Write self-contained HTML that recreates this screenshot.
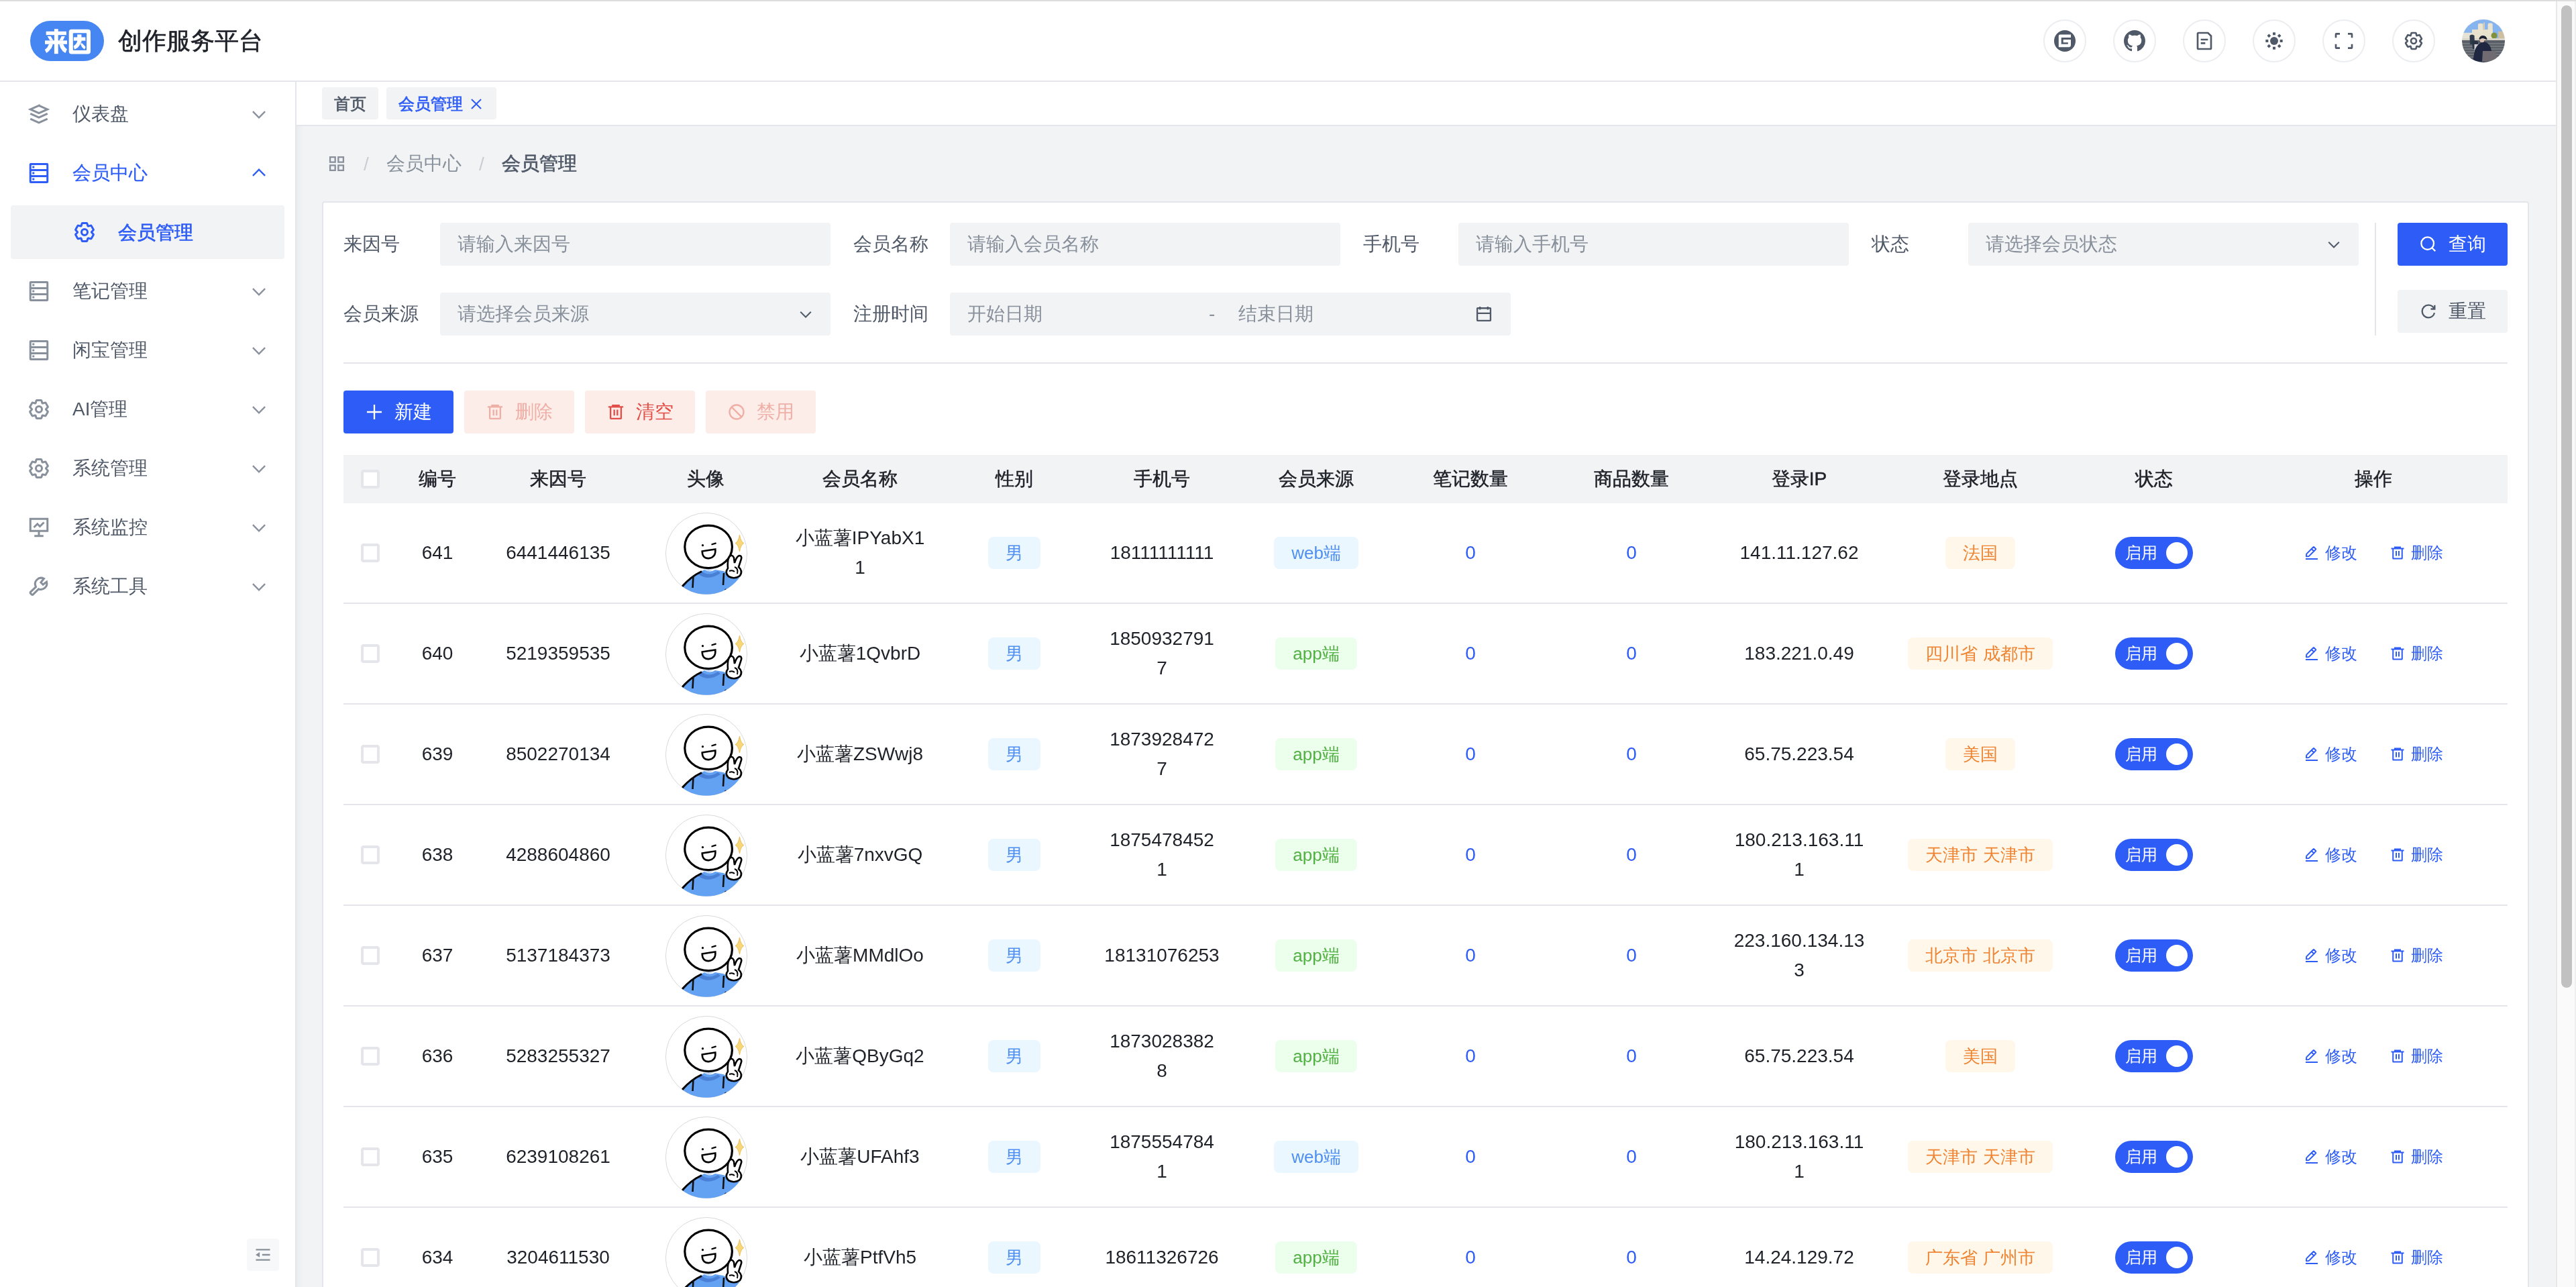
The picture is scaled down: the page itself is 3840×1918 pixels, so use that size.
<!DOCTYPE html><html><head><meta charset="utf-8"><title>会员管理</title><style>
*{box-sizing:border-box;margin:0;padding:0}
html,body{width:3840px;height:1918px;overflow:hidden;background:#fff}
#app{zoom:2;will-change:transform;position:relative;width:1920px;height:959px;overflow:hidden;font-family:"Liberation Sans",sans-serif;font-size:14px;color:#1e2128;background:#f2f3f5}
.ic{display:block}
.abs{position:absolute}
.topline{position:absolute;left:0;top:0;width:1920px;height:1px;background:#dcdedd;z-index:50}
.nav{position:absolute;left:0;top:0;width:1905px;height:61px;background:#fff;border-bottom:1px solid #e5e6eb}
.logo{position:absolute;left:22.5px;top:15.5px;width:55px;height:30px;border-radius:15px;background:#4686f3}
.title{position:absolute;left:88px;top:18.5px;line-height:24px;font-size:18px;color:#1e2128;-webkit-text-stroke:0.3px #1e2128;white-space:nowrap}
.cbtn{position:absolute;top:14.5px;width:32px;height:32px;border-radius:50%;border:1px solid #ebedf0;background:#fff;color:#505968;display:flex;align-items:center;justify-content:center}
.side{position:absolute;left:0;top:61px;width:221px;height:898px;background:#fff;border-right:1px solid #e5e6eb}
.shadow{position:absolute;left:221px;top:61px;width:5px;height:898px;background:linear-gradient(90deg,rgba(0,0,0,0.03),rgba(0,0,0,0))}
.mi{position:absolute;left:8px;width:204px;height:40px;border-radius:2px}
.mi .ico{position:absolute;left:12px;top:11px;color:#88909b}
.mi .txt{position:absolute;left:46px;top:0;line-height:40px;color:#505968;white-space:nowrap}
.mi .arr{position:absolute;left:178px;top:13px;color:#88909b}
.mi.sel .ico,.mi.sel .txt,.mi.sel .arr{color:#2d5cf6}
.mi.sel .txt{-webkit-text-stroke:0.1px #2d5cf6}
.tabs{position:absolute;left:221px;top:61px;width:1684px;height:33px;background:#fff;border-bottom:1px solid #e5e6eb}
.tab{position:absolute;top:4px;height:24px;border-radius:2px;background:#f2f3f5;font-size:12px;line-height:25px;color:#505968;-webkit-text-stroke:0.35px currentColor;white-space:nowrap}
.bc{position:absolute;top:110px;line-height:24px;font-size:14px;color:#88909b;white-space:nowrap}
.card{position:absolute;left:240px;top:150px;width:1645px;height:820px;background:#fff;border:1px solid #e5e6eb;border-radius:2px}
.lbl{position:absolute;line-height:32px;color:#505968;white-space:nowrap}
.inp{position:absolute;height:32px;background:#f2f3f5;border-radius:2px;color:#88909b;line-height:32px;padding-left:13px;white-space:nowrap}
.btn{position:absolute;height:32px;width:82px;border-radius:2px;display:flex;align-items:center;justify-content:center;white-space:nowrap}
.btn .ic{margin-right:8px}
.th{position:absolute;left:256px;top:339px;width:1613px;height:36px;background:#f2f3f5}
.cell{position:absolute;display:flex;align-items:center;justify-content:center;text-align:center;white-space:nowrap;line-height:22px}
.hd{color:#1e2128;-webkit-text-stroke:0.25px #1e2128}
.cb{width:14px;height:14px;border:2px solid #e5e6eb;border-radius:2px;background:#fff}
.rowb{position:absolute;left:256px;width:1613px;height:1px;background:#e5e6eb}
.tag{height:24px;line-height:24px;border-radius:4px;padding:0 13px;font-size:13px;white-space:nowrap}
.tb{background:#ebf7fe;color:#4f8ff2}
.tg{background:#ecfeec;color:#50b142}
.to{background:#fef7ea;color:#ee8432}
.num{color:#2d5cf6}
.sw{position:relative;width:58px;height:24px;border-radius:12px;background:#2d5cf6;color:#fff;font-size:12px;line-height:24px;text-align:left;padding-left:7.5px}
.sw::after{content:"";position:absolute;right:4px;top:4px;width:16px;height:16px;border-radius:50%;background:#fff}
.lnk{color:#2d5cf6;font-size:12px;display:flex;align-items:center}
.lnk .ic{margin-right:4px}
.sb{position:absolute;left:1905px;top:0;width:15px;height:959px;background:#fafafa;border-left:1px solid #e8e8e8;border-right:1px solid #efefef}
@media (max-width:2000px){html,body{width:1920px;height:959px} #app{zoom:1}}
.thumb{position:absolute;left:3px;top:4px;width:8px;height:732px;border-radius:4px;background:#c1c1c1}
</style></head><body><div id="app">
<div class="nav">
<div class="logo"><svg width="55" height="30" viewBox="0 0 110 60"><g fill="#fff"><rect x="35.9" y="12.2" width="5.8" height="37"/><rect x="23.7" y="15.8" width="30.2" height="5.4"/><rect x="22" y="29.4" width="33" height="5.4"/><path d="M25.6 22.9H30.7L34.5 29.6H29.6Z"/><path d="M46.8 22.9H51.9L48.7 29.6H43.3Z"/><path d="M28.1 34.8H33.9L31.8 40.5L27.5 45.4L24.2 48.1L21.8 42.9L25.3 40Z"/><path d="M43.2 34.8H49.2L51.4 38.9L54.9 42.4L52.5 48.1L48.7 45.4L45.2 40.5Z"/><rect x="57.7" y="12.8" width="32.3" height="36.7" rx="4"/></g><rect x="63.8" y="18.2" width="20.3" height="25.9" rx="1" fill="#4686f3"/><g fill="#fff"><rect x="70.2" y="20.4" width="6.2" height="12"/><rect x="64.9" y="24.5" width="17.5" height="5.2"/><path d="M70.9 29.7H76.1L74.2 35.7L70.9 40L66.1 42.7L64.7 37.8L68.3 34.5Z"/><path d="M74.5 33.5H77.5L80.2 36.2L82.7 38.9L80.8 42.7L77 38.9Z"/></g></svg></div>
<div class="title">创作服务平台</div>
<div class="cbtn" style="left:1523px"><svg class="ic" width="16" height="16" viewBox="0 0 32 32"><circle cx="16" cy="16" r="16" fill="currentColor"/><path d="M9 6.4H25V10.9H10.7V20.8H20.8V18.2H13.7V14H25V22A3.2 3.2 0 0 1 21.8 25.2H6.8V8.6A2.2 2.2 0 0 1 9 6.4Z" fill="#fff"/></svg></div>
<div class="cbtn" style="left:1575px"><svg class="ic" width="16" height="16" viewBox="0 0 16 16"><path fill="currentColor" d="M8 0C3.58 0 0 3.58 0 8c0 3.54 2.29 6.53 5.47 7.59.4.07.55-.17.55-.38 0-.19-.01-.82-.01-1.49-2.01.37-2.53-.49-2.69-.94-.09-.23-.48-.94-.82-1.13-.28-.15-.68-.52-.01-.53.63-.01 1.08.58 1.23.82.72 1.21 1.87.87 2.33.66.07-.52.28-.87.51-1.07-1.78-.2-3.64-.89-3.64-3.95 0-.87.31-1.59.82-2.15-.08-.2-.36-1.02.08-2.12 0 0 .67-.21 2.2.82.64-.18 1.32-.27 2-.27.68 0 1.36.09 2 .27 1.530-1.04 2.2-.82 2.2-.82.44 1.1.16 1.92.08 2.12.51.56.82 1.27.82 2.15 0 3.07-1.87 3.75-3.650 3.95.29.25.54.73.54 1.48 0 1.07-.01 1.93-.01 2.2 0 .21.15.46.55.38A8.013 8.013 0 0016 8c0-4.42-3.58-8-8-8z"/></svg></div>
<div class="cbtn" style="left:1627px"><svg class="ic" width="16" height="16" viewBox="0 0 48 48" fill="none" stroke="currentColor" stroke-width="4" ><path d="M16 21h16m-16 8h10m11 13H11a2 2 0 0 1-2-2V8a2 2 0 0 1 2-2h21l7 7v27a2 2 0 0 1-2 2Z"/></svg></div>
<div class="cbtn" style="left:1679px"><svg class="ic" width="16" height="16" viewBox="0 0 48 48" fill="currentColor"><circle cx="24" cy="24" r="9"/><rect x="21" y="5" width="6" height="6" rx=".5"/><rect x="21" y="37" width="6" height="6" rx=".5"/><rect x="5" y="21" width="6" height="6" rx=".5"/><rect x="37" y="21" width="6" height="6" rx=".5"/><rect x="9.5" y="9.5" width="6" height="6" rx=".5" transform="rotate(45 12.5 12.5)"/><rect x="32.5" y="9.5" width="6" height="6" rx=".5" transform="rotate(45 35.5 12.5)"/><rect x="9.5" y="32.5" width="6" height="6" rx=".5" transform="rotate(45 12.5 35.5)"/><rect x="32.5" y="32.5" width="6" height="6" rx=".5" transform="rotate(45 35.5 35.5)"/></svg></div>
<div class="cbtn" style="left:1731px"><svg class="ic" width="16" height="16" viewBox="0 0 48 48" fill="none" stroke="currentColor" stroke-width="4" ><path d="M42 17V9a1 1 0 0 0-1-1h-8M6 17V9a1 1 0 0 1 1-1h8m27 23v8a1 1 0 0 1-1 1h-8M6 31v8a1 1 0 0 0 1 1h8"/></svg></div>
<div class="cbtn" style="left:1783px"><svg class="ic" width="16" height="16" viewBox="0 0 48 48" fill="none" stroke="currentColor" stroke-width="4" ><path d="M18.797 6.732A1 1 0 0 1 19.76 6h8.48a1 1 0 0 1 .964.732l1.285 4.628a1 1 0 0 0 1.213.7l4.651-1.2a1 1 0 0 1 1.116.468l4.24 7.344a1 1 0 0 1-.153 1.2L38.193 23.3a1 1 0 0 0 0 1.402l3.364 3.427a1 1 0 0 1 .153 1.2l-4.24 7.344a1 1 0 0 1-1.116.468l-4.65-1.2a1 1 0 0 0-1.214.7l-1.285 4.628a1 1 0 0 1-.964.732h-8.48a1 1 0 0 1-.963-.732L17.51 36.64a1 1 0 0 0-1.213-.7l-4.65 1.2a1 1 0 0 1-1.116-.468l-4.24-7.344a1 1 0 0 1 .153-1.2L9.809 24.7a1 1 0 0 0 0-1.402l-3.364-3.427a1 1 0 0 1-.153-1.2l4.24-7.344a1 1 0 0 1 1.116-.468l4.65 1.2a1 1 0 0 0 1.213-.7l1.286-4.628Z"/><path d="M30 24a6 6 0 1 1-12 0 6 6 0 0 1 12 0Z"/></svg></div>
<div class="abs" style="left:1835px;top:14.5px;width:32px;height:32px;border-radius:50%;overflow:hidden"><svg width="32" height="32" viewBox="0 0 64 64" style="filter:blur(0.35px)"><rect width="64" height="64" fill="#86b4ee"/><rect x="0" y="19.8" width="23" height="10" fill="#e6e2d6"/><rect x="54" y="17.7" width="10" height="13" fill="#cdbf9f"/><rect x="15" y="15" width="31" height="15" fill="#e8e1cc"/><rect x="23.9" y="6" width="7.6" height="14" rx="2" fill="#ebe4cf"/><rect x="38.6" y="5.5" width="7.1" height="14.5" rx="2" fill="#ebe4cf"/><rect x="31.8" y="4.6" width="2.2" height="11" fill="#d8cdb2"/><circle cx="48" cy="24" r="4.5" fill="#80903f"/><rect x="0" y="30" width="64" height="34" fill="#5a5e66"/><path d="M0 36h64M0 40h64M0 44h64M0 48h64M0 52h64M0 56h64" stroke="#8b8f95" stroke-width="1"/><rect x="0" y="28" width="64" height="3" fill="#d9d4c8"/><path d="M11.5 24 Q15 21 18.5 24 L19 37 L12 37Z" fill="#2f3a4a"/><path d="M15 33 Q20 30 24 33 L24 44 L16 44Z" fill="#2a3344"/><rect x="18.5" y="37" width="6.5" height="12" fill="#cfcfd2"/><path d="M16 64 L19 46 Q24 34 33 33 Q42 35 44 46 L45 64Z" fill="#1f2840"/><path d="M31 47 L50 47 L53 62 L30 63Z" fill="#6f6b70"/><ellipse cx="30" cy="31" rx="3.4" ry="3.2" fill="#dcc2ae"/><path d="M25.5 29.5 Q26 24 31.5 24 Q37 24 37.5 30.5 L34 29 Q30 26.5 26.5 30Z" fill="#1b2130"/></svg></div>
</div>
<div class="side">
<div class="mi" style="top:4px"><div class="ico"><svg class="ic" width="18" height="18" viewBox="0 0 48 48" fill="none" stroke="currentColor" stroke-width="4" ><path d="M24.015 7.017 41 14.62l-16.985 7.605L7.03 14.62l16.985-7.604Z"/><path d="m41 23.255-16.985 7.604L7.03 23.255"/><path d="m40.97 33.412-16.985 7.605-16.985-7.605"/></svg></div><div class="txt">仪表盘</div><div class="arr"><svg class="ic" width="14" height="14" viewBox="0 0 48 48" fill="none" stroke="currentColor" stroke-width="4" ><path d="M39.6 17.443 24.043 33 8.487 17.443"/></svg></div></div>
<div class="mi sel" style="top:48px"><div class="ico"><svg class="ic" width="18" height="18" viewBox="0 0 48 48" fill="none" stroke="currentColor" stroke-width="4" ><path d="M7 18h34v12H7V18ZM40 6H8a1 1 0 0 0-1 1v11h34V7a1 1 0 0 0-1-1ZM7 30h34v11a1 1 0 0 1-1 1H8a1 1 0 0 1-1-1V30Z"/><path d="M11 10h4v4h-4zM11 22h4v4h-4zM11 34h4v4h-4z" fill="currentColor" stroke="none"/></svg></div><div class="txt">会员中心</div><div class="arr"><svg class="ic" width="14" height="14" viewBox="0 0 48 48" fill="none" stroke="currentColor" stroke-width="4" ><path d="M39.6 30.557 24.043 15 8.487 30.557"/></svg></div></div>
<div class="mi" style="top:136px"><div class="ico"><svg class="ic" width="18" height="18" viewBox="0 0 48 48" fill="none" stroke="currentColor" stroke-width="4" ><path d="M7 18h34v12H7V18ZM40 6H8a1 1 0 0 0-1 1v11h34V7a1 1 0 0 0-1-1ZM7 30h34v11a1 1 0 0 1-1 1H8a1 1 0 0 1-1-1V30Z"/><path d="M11 10h4v4h-4zM11 22h4v4h-4zM11 34h4v4h-4z" fill="currentColor" stroke="none"/></svg></div><div class="txt">笔记管理</div><div class="arr"><svg class="ic" width="14" height="14" viewBox="0 0 48 48" fill="none" stroke="currentColor" stroke-width="4" ><path d="M39.6 17.443 24.043 33 8.487 17.443"/></svg></div></div>
<div class="mi" style="top:180px"><div class="ico"><svg class="ic" width="18" height="18" viewBox="0 0 48 48" fill="none" stroke="currentColor" stroke-width="4" ><path d="M7 18h34v12H7V18ZM40 6H8a1 1 0 0 0-1 1v11h34V7a1 1 0 0 0-1-1ZM7 30h34v11a1 1 0 0 1-1 1H8a1 1 0 0 1-1-1V30Z"/><path d="M11 10h4v4h-4zM11 22h4v4h-4zM11 34h4v4h-4z" fill="currentColor" stroke="none"/></svg></div><div class="txt">闲宝管理</div><div class="arr"><svg class="ic" width="14" height="14" viewBox="0 0 48 48" fill="none" stroke="currentColor" stroke-width="4" ><path d="M39.6 17.443 24.043 33 8.487 17.443"/></svg></div></div>
<div class="mi" style="top:224px"><div class="ico"><svg class="ic" width="18" height="18" viewBox="0 0 48 48" fill="none" stroke="currentColor" stroke-width="4" ><path d="M18.797 6.732A1 1 0 0 1 19.76 6h8.48a1 1 0 0 1 .964.732l1.285 4.628a1 1 0 0 0 1.213.7l4.651-1.2a1 1 0 0 1 1.116.468l4.24 7.344a1 1 0 0 1-.153 1.2L38.193 23.3a1 1 0 0 0 0 1.402l3.364 3.427a1 1 0 0 1 .153 1.2l-4.24 7.344a1 1 0 0 1-1.116.468l-4.65-1.2a1 1 0 0 0-1.214.7l-1.285 4.628a1 1 0 0 1-.964.732h-8.48a1 1 0 0 1-.963-.732L17.51 36.64a1 1 0 0 0-1.213-.7l-4.65 1.2a1 1 0 0 1-1.116-.468l-4.24-7.344a1 1 0 0 1 .153-1.2L9.809 24.7a1 1 0 0 0 0-1.402l-3.364-3.427a1 1 0 0 1-.153-1.2l4.24-7.344a1 1 0 0 1 1.116-.468l4.65 1.2a1 1 0 0 0 1.213-.7l1.286-4.628Z"/><path d="M30 24a6 6 0 1 1-12 0 6 6 0 0 1 12 0Z"/></svg></div><div class="txt">AI管理</div><div class="arr"><svg class="ic" width="14" height="14" viewBox="0 0 48 48" fill="none" stroke="currentColor" stroke-width="4" ><path d="M39.6 17.443 24.043 33 8.487 17.443"/></svg></div></div>
<div class="mi" style="top:268px"><div class="ico"><svg class="ic" width="18" height="18" viewBox="0 0 48 48" fill="none" stroke="currentColor" stroke-width="4" ><path d="M18.797 6.732A1 1 0 0 1 19.76 6h8.48a1 1 0 0 1 .964.732l1.285 4.628a1 1 0 0 0 1.213.7l4.651-1.2a1 1 0 0 1 1.116.468l4.24 7.344a1 1 0 0 1-.153 1.2L38.193 23.3a1 1 0 0 0 0 1.402l3.364 3.427a1 1 0 0 1 .153 1.2l-4.24 7.344a1 1 0 0 1-1.116.468l-4.65-1.2a1 1 0 0 0-1.214.7l-1.285 4.628a1 1 0 0 1-.964.732h-8.48a1 1 0 0 1-.963-.732L17.51 36.64a1 1 0 0 0-1.213-.7l-4.65 1.2a1 1 0 0 1-1.116-.468l-4.24-7.344a1 1 0 0 1 .153-1.2L9.809 24.7a1 1 0 0 0 0-1.402l-3.364-3.427a1 1 0 0 1-.153-1.2l4.24-7.344a1 1 0 0 1 1.116-.468l4.65 1.2a1 1 0 0 0 1.213-.7l1.286-4.628Z"/><path d="M30 24a6 6 0 1 1-12 0 6 6 0 0 1 12 0Z"/></svg></div><div class="txt">系统管理</div><div class="arr"><svg class="ic" width="14" height="14" viewBox="0 0 48 48" fill="none" stroke="currentColor" stroke-width="4" ><path d="M39.6 17.443 24.043 33 8.487 17.443"/></svg></div></div>
<div class="mi" style="top:312px"><div class="ico"><svg class="ic" width="18" height="18" viewBox="0 0 48 48" fill="none" stroke="currentColor" stroke-width="4" ><path d="M41 7H7v24h34V7Z"/><path d="M24 31v10"/><path d="M15 41h18"/><path d="M14 24l7-7 5 5 8-8"/></svg></div><div class="txt">系统监控</div><div class="arr"><svg class="ic" width="14" height="14" viewBox="0 0 48 48" fill="none" stroke="currentColor" stroke-width="4" ><path d="M39.6 17.443 24.043 33 8.487 17.443"/></svg></div></div>
<div class="mi" style="top:356px"><div class="ico"><svg class="ic" width="18" height="18" viewBox="0 0 48 48" fill="none" stroke="currentColor" stroke-width="4" ><path d="M23.3 29.1 L12.5 39.9 Q11 41.4 9.5 39.9 L7.5 37.9 Q6 36.4 7.5 34.9 L18 24.8 A12 12 0 0 1 34 8.4 L27.8 15.9 L32.2 20.4 L39.4 14.9 A12 12 0 0 1 23.3 29.1Z"/></svg></div><div class="txt">系统工具</div><div class="arr"><svg class="ic" width="14" height="14" viewBox="0 0 48 48" fill="none" stroke="currentColor" stroke-width="4" ><path d="M39.6 17.443 24.043 33 8.487 17.443"/></svg></div></div>
<div class="mi" style="top:92px;background:#f2f3f5"><div class="ico" style="left:46px;color:#2d5cf6"><svg class="ic" width="18" height="18" viewBox="0 0 48 48" fill="none" stroke="currentColor" stroke-width="4" ><path d="M18.797 6.732A1 1 0 0 1 19.76 6h8.48a1 1 0 0 1 .964.732l1.285 4.628a1 1 0 0 0 1.213.7l4.651-1.2a1 1 0 0 1 1.116.468l4.24 7.344a1 1 0 0 1-.153 1.2L38.193 23.3a1 1 0 0 0 0 1.402l3.364 3.427a1 1 0 0 1 .153 1.2l-4.24 7.344a1 1 0 0 1-1.116.468l-4.65-1.2a1 1 0 0 0-1.214.7l-1.285 4.628a1 1 0 0 1-.964.732h-8.48a1 1 0 0 1-.963-.732L17.51 36.64a1 1 0 0 0-1.213-.7l-4.65 1.2a1 1 0 0 1-1.116-.468l-4.24-7.344a1 1 0 0 1 .153-1.2L9.809 24.7a1 1 0 0 0 0-1.402l-3.364-3.427a1 1 0 0 1-.153-1.2l4.24-7.344a1 1 0 0 1 1.116-.468l4.65 1.2a1 1 0 0 0 1.213-.7l1.286-4.628Z"/><path d="M30 24a6 6 0 1 1-12 0 6 6 0 0 1 12 0Z"/></svg></div><div class="txt" style="left:80px;top:0.5px;color:#2d5cf6;-webkit-text-stroke:0.35px #2d5cf6">会员管理</div></div>
<div class="abs" style="left:184px;top:862px;width:24px;height:24px;border-radius:2px;background:#f7f8fa;color:#88909b;display:flex;align-items:center;justify-content:center"><svg class="ic" width="14" height="14" viewBox="0 0 48 48" fill="none" stroke="currentColor" stroke-width="4" ><path d="M42 11H6M42 24H22M42 37H6M13.66 26.912l-4.82-3.118 4.82-3.118v6.236Z"/></svg></div>
</div>
<div class="shadow"></div>
<div class="tabs">
<div class="tab" style="left:19px;width:42px;text-align:center">首页</div>
<div class="tab" style="left:67px;width:82px;color:#2d5cf6;padding-left:9px">会员管理<span class="abs" style="left:61px;top:6.7px;color:#2d5cf6"><svg class="ic" width="12" height="12" viewBox="0 0 48 48" fill="none" stroke="currentColor" stroke-width="4" ><path d="M9.857 9.858 24 24m0 0 14.142 14.142M24 24 38.142 9.858M24 24 9.857 38.142"/></svg></span></div>
</div>
<div class="abs" style="left:244px;top:115px;color:#88909b"><svg class="ic" width="14" height="14" viewBox="0 0 48 48" fill="none" stroke="currentColor" stroke-width="4" ><path d="M7 7h13v13H7zM28 7h13v13H28zM7 28h13v13H7zM28 28h13v13H28z"/></svg></div>
<div class="bc" style="left:271px;top:110.5px;color:#c9cdd4">/</div>
<div class="bc" style="left:288px">会员中心</div>
<div class="bc" style="left:357px;top:110.5px;color:#c9cdd4">/</div>
<div class="bc" style="left:374px;color:#505968;-webkit-text-stroke:0.35px #505968">会员管理</div>
<div class="card"></div>
<div class="lbl" style="left:256px;top:166px">来因号</div>
<div class="inp" style="left:328px;top:166px;width:291px">请输入来因号</div>
<div class="lbl" style="left:636px;top:166px">会员名称</div>
<div class="inp" style="left:708px;top:166px;width:291px">请输入会员名称</div>
<div class="lbl" style="left:1016px;top:166px">手机号</div>
<div class="inp" style="left:1087px;top:166px;width:291px">请输入手机号</div>
<div class="lbl" style="left:1395px;top:166px">状态</div>
<div class="inp" style="left:1467px;top:166px;width:291px">请选择会员状态<span class="abs" style="right:12.5px;top:10px;color:#505968"><svg class="ic" width="12" height="12" viewBox="0 0 48 48" fill="none" stroke="currentColor" stroke-width="4" ><path d="M39.6 17.443 24.043 33 8.487 17.443"/></svg></span></div>
<div class="lbl" style="left:256px;top:218px">会员来源</div>
<div class="inp" style="left:328px;top:218px;width:291px">请选择会员来源<span class="abs" style="right:12.5px;top:10px;color:#505968"><svg class="ic" width="12" height="12" viewBox="0 0 48 48" fill="none" stroke="currentColor" stroke-width="4" ><path d="M39.6 17.443 24.043 33 8.487 17.443"/></svg></span></div>
<div class="lbl" style="left:636px;top:218px">注册时间</div>
<div class="inp" style="left:708px;top:218px;width:418px">开始日期<span class="abs" style="left:193px;top:0">-</span><span class="abs" style="left:215px;top:0">结束日期</span><span class="abs" style="left:391px;top:9px;color:#505968"><svg class="ic" width="14" height="14" viewBox="0 0 48 48" fill="none" stroke="currentColor" stroke-width="4" ><path d="M7 22h34M14 5v8m20-8v8M8 41h32a1 1 0 0 0 1-1V10a1 1 0 0 0-1-1H8a1 1 0 0 0-1 1v30a1 1 0 0 0 1 1Z"/></svg></span></div>
<div class="abs" style="left:1770px;top:166px;width:1px;height:84px;background:#e5e6eb"></div>
<div class="btn" style="left:1787px;top:166px;background:#2d5cf6;color:#fff"><svg class="ic" width="14" height="14" viewBox="0 0 48 48" fill="none" stroke="currentColor" stroke-width="4" ><path d="M33.072 33.071c6.248-6.248 6.248-16.379 0-22.627-6.249-6.249-16.38-6.249-22.628 0-6.248 6.248-6.248 16.379 0 22.627 6.248 6.248 16.38 6.248 22.628 0Zm0 0 8.485 8.485"/></svg>查询</div>
<div class="btn" style="left:1787px;top:216px;background:#f2f3f5;color:#505968"><svg class="ic" width="14" height="14" viewBox="0 0 48 48" fill="none" stroke="currentColor" stroke-width="4" ><path d="M38.837 18C36.463 12.136 30.715 8 24 8 15.163 8 8 15.163 8 24s7.163 16 16 16c7.455 0 13.72-5.1 15.496-12M40 8v10H30"/></svg>重置</div>
<div class="abs" style="left:256px;top:270px;width:1613px;height:1px;background:#e5e6eb"></div>
<div class="btn" style="left:256px;top:291px;background:#2d5cf6;color:#fff"><svg class="ic" width="14" height="14" viewBox="0 0 48 48" fill="none" stroke="currentColor" stroke-width="4" ><path d="M5 24h38M24 5v38"/></svg>新建</div>
<div class="btn" style="left:346px;top:291px;background:#fcede9;color:#efafa6"><svg class="ic" width="14" height="14" viewBox="0 0 48 48" fill="none" stroke="currentColor" stroke-width="4" ><path d="M5 11h5.5m0 0v29a1 1 0 0 0 1 1h25a1 1 0 0 0 1-1V11m-27 0H16m21.5 0H43m-5.5 0H32m-16 0V7h16v4m-16 0h16M20 18v15m8-15v15"/></svg>删除</div>
<div class="btn" style="left:436px;top:291px;background:#fcede9;color:#e24f48"><svg class="ic" width="14" height="14" viewBox="0 0 48 48" fill="none" stroke="currentColor" stroke-width="4" ><path d="M5 11h5.5m0 0v29a1 1 0 0 0 1 1h25a1 1 0 0 0 1-1V11m-27 0H16m21.5 0H43m-5.5 0H32m-16 0V7h16v4m-16 0h16M20 18v15m8-15v15"/></svg>清空</div>
<div class="btn" style="left:526px;top:291px;background:#fcede9;color:#efafa6"><svg class="ic" width="14" height="14" viewBox="0 0 48 48" fill="none" stroke="currentColor" stroke-width="4" ><path d="M36.728 36.728c7.03-7.03 7.03-18.427 0-25.456-7.03-7.03-18.427-7.03-25.456 0m25.456 25.456c-7.03 7.03-18.427 7.03-25.456 0-7.03-7.03-7.03-18.427 0-25.456m25.456 25.456L11.272 11.272"/></svg>禁用</div>
<div class="th"></div>
<div class="cell" style="left:256px;top:339px;width:40px;height:36px"><div class="cb"></div></div>
<div class="cell hd" style="left:296px;top:339px;width:60px;height:36px">编号</div>
<div class="cell hd" style="left:356px;top:339px;width:120px;height:36px">来因号</div>
<div class="cell hd" style="left:476px;top:339px;width:100px;height:36px">头像</div>
<div class="cell hd" style="left:576px;top:339px;width:130px;height:36px">会员名称</div>
<div class="cell hd" style="left:706px;top:339px;width:100px;height:36px">性别</div>
<div class="cell hd" style="left:806px;top:339px;width:120px;height:36px">手机号</div>
<div class="cell hd" style="left:926px;top:339px;width:110px;height:36px">会员来源</div>
<div class="cell hd" style="left:1036px;top:339px;width:120px;height:36px">笔记数量</div>
<div class="cell hd" style="left:1156px;top:339px;width:120px;height:36px">商品数量</div>
<div class="cell hd" style="left:1276px;top:339px;width:130px;height:36px">登录IP</div>
<div class="cell hd" style="left:1406px;top:339px;width:140px;height:36px">登录地点</div>
<div class="cell hd" style="left:1546px;top:339px;width:119px;height:36px">状态</div>
<div class="cell hd" style="left:1666px;top:339px;width:206px;height:36px">操作</div>
<div class="cell" style="left:256px;top:375px;width:40px;height:74px"><div class="cb"></div></div>
<div class="cell" style="left:296px;top:375px;width:60px;height:74px">641</div>
<div class="cell" style="left:356px;top:375px;width:120px;height:74px">6441446135</div>
<div class="cell" style="left:476px;top:375px;width:100px;height:74px"><svg width="61" height="61" viewBox="0 0 122 122" style="transform:translate(0.5px,0.5px)"><defs><clipPath id="ac0"><circle cx="61" cy="61" r="60.8"/></clipPath></defs><circle cx="61" cy="61" r="60.6" fill="#fff" stroke="#d9d9d9" stroke-width="1"/><g clip-path="url(#ac0)"><path d="M20 126 L25 110 Q38 95 52 88 L58 85 Q66 90 74 85 L86 87 Q96 92 110 92 L124 98 L124 130 Z" fill="#63a1f2"/><path d="M54 87 Q64 96 78 87 L82 90 Q64 103 48 91 Z" fill="#4a7fd6"/><path d="M58 84.5 Q64 89 71 84.5" fill="#b9cdf0" stroke="none"/><path d="M25 110 Q38 95 54 87.5" fill="none" stroke="#000" stroke-width="3"/><path d="M41.5 94 L40.5 112 M87 90 L86 108 M40 119 L40 126 M89 114 L93 121" fill="none" stroke="#111" stroke-width="2.6"/></g><ellipse cx="64.1" cy="50.9" rx="35.3" ry="31.8" fill="#fff" stroke="#000" stroke-width="3.2"/><circle cx="55.5" cy="48.7" r="1.6" fill="#000"/><path d="M69.4 47.3 L74.8 45.6" stroke="#000" stroke-width="2.2" stroke-linecap="round"/><path d="M54.7 57.5 Q64 56 74.3 54.5 Q75.5 66.5 64.5 68.1 Q55 68.5 54.7 57.5Z" fill="#fff" stroke="#000" stroke-width="2.6"/><g transform="translate(3 1)"><path d="M91 94 Q85 88 90 82 Q89 70 92 65 Q96 60 99 66 L100 74 Q103 64 107 63 Q111 63 110 68 L106 80 Q113 86 108 93 Q100 99 91 94Z" fill="#fff" stroke="#000" stroke-width="2.6"/><path d="M92 86 Q97 84 100 87 M100 80 Q106 82 104 90" fill="none" stroke="#000" stroke-width="2"/></g><path d="M110.5 33 Q112 43 116.8 45.5 Q112 48 110.5 58 Q109 48 104.2 45.5 Q109 43 110.5 33Z" fill="#f7d77a" stroke="#ecbd58" stroke-width="1"/></svg></div>
<div class="cell" style="left:576px;top:375px;width:130px;height:74px">小蓝薯IPYabX1<br>1</div>
<div class="cell" style="left:706px;top:375px;width:100px;height:74px"><div class="tag tb">男</div></div>
<div class="cell" style="left:806px;top:375px;width:120px;height:74px">18111111111</div>
<div class="cell" style="left:926px;top:375px;width:110px;height:74px"><div class="tag tb">web端</div></div>
<div class="cell" style="left:1036px;top:375px;width:120px;height:74px"><span class="num">0</span></div>
<div class="cell" style="left:1156px;top:375px;width:120px;height:74px"><span class="num">0</span></div>
<div class="cell" style="left:1276px;top:375px;width:130px;height:74px">141.11.127.62</div>
<div class="cell" style="left:1406px;top:375px;width:140px;height:74px"><div class="tag to">法国</div></div>
<div class="cell" style="left:1546px;top:375px;width:119px;height:74px"><div class="sw">启用</div></div>
<div class="cell" style="left:1666px;top:375px;width:206px;height:74px"><div class="lnk"><svg class="ic" width="12" height="12" viewBox="0 0 48 48" fill="none" stroke="currentColor" stroke-width="4" ><path d="m30.48 19.038 5.733-5.734a1 1 0 0 0 0-1.414l-5.586-5.586a1 1 0 0 0-1.414 0l-5.734 5.734m7 7L15.763 33.754a1 1 0 0 1-.59.286l-6.048.708a1 1 0 0 1-1.113-1.069l.477-6.31a1 1 0 0 1 .29-.631l14.7-14.7m7 7-7-7M6 42h36"/></svg>修改</div><div style="width:24px"></div><div class="lnk"><svg class="ic" width="12" height="12" viewBox="0 0 48 48" fill="none" stroke="currentColor" stroke-width="4" ><path d="M5 11h5.5m0 0v29a1 1 0 0 0 1 1h25a1 1 0 0 0 1-1V11m-27 0H16m21.5 0H43m-5.5 0H32m-16 0V7h16v4m-16 0h16M20 18v15m8-15v15"/></svg>删除</div></div>
<div class="rowb" style="top:449px"></div>
<div class="cell" style="left:256px;top:450px;width:40px;height:74px"><div class="cb"></div></div>
<div class="cell" style="left:296px;top:450px;width:60px;height:74px">640</div>
<div class="cell" style="left:356px;top:450px;width:120px;height:74px">5219359535</div>
<div class="cell" style="left:476px;top:450px;width:100px;height:74px"><svg width="61" height="61" viewBox="0 0 122 122" style="transform:translate(0.5px,0.5px)"><defs><clipPath id="ac1"><circle cx="61" cy="61" r="60.8"/></clipPath></defs><circle cx="61" cy="61" r="60.6" fill="#fff" stroke="#d9d9d9" stroke-width="1"/><g clip-path="url(#ac1)"><path d="M20 126 L25 110 Q38 95 52 88 L58 85 Q66 90 74 85 L86 87 Q96 92 110 92 L124 98 L124 130 Z" fill="#63a1f2"/><path d="M54 87 Q64 96 78 87 L82 90 Q64 103 48 91 Z" fill="#4a7fd6"/><path d="M58 84.5 Q64 89 71 84.5" fill="#b9cdf0" stroke="none"/><path d="M25 110 Q38 95 54 87.5" fill="none" stroke="#000" stroke-width="3"/><path d="M41.5 94 L40.5 112 M87 90 L86 108 M40 119 L40 126 M89 114 L93 121" fill="none" stroke="#111" stroke-width="2.6"/></g><ellipse cx="64.1" cy="50.9" rx="35.3" ry="31.8" fill="#fff" stroke="#000" stroke-width="3.2"/><circle cx="55.5" cy="48.7" r="1.6" fill="#000"/><path d="M69.4 47.3 L74.8 45.6" stroke="#000" stroke-width="2.2" stroke-linecap="round"/><path d="M54.7 57.5 Q64 56 74.3 54.5 Q75.5 66.5 64.5 68.1 Q55 68.5 54.7 57.5Z" fill="#fff" stroke="#000" stroke-width="2.6"/><g transform="translate(3 1)"><path d="M91 94 Q85 88 90 82 Q89 70 92 65 Q96 60 99 66 L100 74 Q103 64 107 63 Q111 63 110 68 L106 80 Q113 86 108 93 Q100 99 91 94Z" fill="#fff" stroke="#000" stroke-width="2.6"/><path d="M92 86 Q97 84 100 87 M100 80 Q106 82 104 90" fill="none" stroke="#000" stroke-width="2"/></g><path d="M110.5 33 Q112 43 116.8 45.5 Q112 48 110.5 58 Q109 48 104.2 45.5 Q109 43 110.5 33Z" fill="#f7d77a" stroke="#ecbd58" stroke-width="1"/></svg></div>
<div class="cell" style="left:576px;top:450px;width:130px;height:74px">小蓝薯1QvbrD</div>
<div class="cell" style="left:706px;top:450px;width:100px;height:74px"><div class="tag tb">男</div></div>
<div class="cell" style="left:806px;top:450px;width:120px;height:74px">1850932791<br>7</div>
<div class="cell" style="left:926px;top:450px;width:110px;height:74px"><div class="tag tg">app端</div></div>
<div class="cell" style="left:1036px;top:450px;width:120px;height:74px"><span class="num">0</span></div>
<div class="cell" style="left:1156px;top:450px;width:120px;height:74px"><span class="num">0</span></div>
<div class="cell" style="left:1276px;top:450px;width:130px;height:74px">183.221.0.49</div>
<div class="cell" style="left:1406px;top:450px;width:140px;height:74px"><div class="tag to">四川省 成都市</div></div>
<div class="cell" style="left:1546px;top:450px;width:119px;height:74px"><div class="sw">启用</div></div>
<div class="cell" style="left:1666px;top:450px;width:206px;height:74px"><div class="lnk"><svg class="ic" width="12" height="12" viewBox="0 0 48 48" fill="none" stroke="currentColor" stroke-width="4" ><path d="m30.48 19.038 5.733-5.734a1 1 0 0 0 0-1.414l-5.586-5.586a1 1 0 0 0-1.414 0l-5.734 5.734m7 7L15.763 33.754a1 1 0 0 1-.59.286l-6.048.708a1 1 0 0 1-1.113-1.069l.477-6.31a1 1 0 0 1 .29-.631l14.7-14.7m7 7-7-7M6 42h36"/></svg>修改</div><div style="width:24px"></div><div class="lnk"><svg class="ic" width="12" height="12" viewBox="0 0 48 48" fill="none" stroke="currentColor" stroke-width="4" ><path d="M5 11h5.5m0 0v29a1 1 0 0 0 1 1h25a1 1 0 0 0 1-1V11m-27 0H16m21.5 0H43m-5.5 0H32m-16 0V7h16v4m-16 0h16M20 18v15m8-15v15"/></svg>删除</div></div>
<div class="rowb" style="top:524px"></div>
<div class="cell" style="left:256px;top:525px;width:40px;height:74px"><div class="cb"></div></div>
<div class="cell" style="left:296px;top:525px;width:60px;height:74px">639</div>
<div class="cell" style="left:356px;top:525px;width:120px;height:74px">8502270134</div>
<div class="cell" style="left:476px;top:525px;width:100px;height:74px"><svg width="61" height="61" viewBox="0 0 122 122" style="transform:translate(0.5px,0.5px)"><defs><clipPath id="ac2"><circle cx="61" cy="61" r="60.8"/></clipPath></defs><circle cx="61" cy="61" r="60.6" fill="#fff" stroke="#d9d9d9" stroke-width="1"/><g clip-path="url(#ac2)"><path d="M20 126 L25 110 Q38 95 52 88 L58 85 Q66 90 74 85 L86 87 Q96 92 110 92 L124 98 L124 130 Z" fill="#63a1f2"/><path d="M54 87 Q64 96 78 87 L82 90 Q64 103 48 91 Z" fill="#4a7fd6"/><path d="M58 84.5 Q64 89 71 84.5" fill="#b9cdf0" stroke="none"/><path d="M25 110 Q38 95 54 87.5" fill="none" stroke="#000" stroke-width="3"/><path d="M41.5 94 L40.5 112 M87 90 L86 108 M40 119 L40 126 M89 114 L93 121" fill="none" stroke="#111" stroke-width="2.6"/></g><ellipse cx="64.1" cy="50.9" rx="35.3" ry="31.8" fill="#fff" stroke="#000" stroke-width="3.2"/><circle cx="55.5" cy="48.7" r="1.6" fill="#000"/><path d="M69.4 47.3 L74.8 45.6" stroke="#000" stroke-width="2.2" stroke-linecap="round"/><path d="M54.7 57.5 Q64 56 74.3 54.5 Q75.5 66.5 64.5 68.1 Q55 68.5 54.7 57.5Z" fill="#fff" stroke="#000" stroke-width="2.6"/><g transform="translate(3 1)"><path d="M91 94 Q85 88 90 82 Q89 70 92 65 Q96 60 99 66 L100 74 Q103 64 107 63 Q111 63 110 68 L106 80 Q113 86 108 93 Q100 99 91 94Z" fill="#fff" stroke="#000" stroke-width="2.6"/><path d="M92 86 Q97 84 100 87 M100 80 Q106 82 104 90" fill="none" stroke="#000" stroke-width="2"/></g><path d="M110.5 33 Q112 43 116.8 45.5 Q112 48 110.5 58 Q109 48 104.2 45.5 Q109 43 110.5 33Z" fill="#f7d77a" stroke="#ecbd58" stroke-width="1"/></svg></div>
<div class="cell" style="left:576px;top:525px;width:130px;height:74px">小蓝薯ZSWwj8</div>
<div class="cell" style="left:706px;top:525px;width:100px;height:74px"><div class="tag tb">男</div></div>
<div class="cell" style="left:806px;top:525px;width:120px;height:74px">1873928472<br>7</div>
<div class="cell" style="left:926px;top:525px;width:110px;height:74px"><div class="tag tg">app端</div></div>
<div class="cell" style="left:1036px;top:525px;width:120px;height:74px"><span class="num">0</span></div>
<div class="cell" style="left:1156px;top:525px;width:120px;height:74px"><span class="num">0</span></div>
<div class="cell" style="left:1276px;top:525px;width:130px;height:74px">65.75.223.54</div>
<div class="cell" style="left:1406px;top:525px;width:140px;height:74px"><div class="tag to">美国</div></div>
<div class="cell" style="left:1546px;top:525px;width:119px;height:74px"><div class="sw">启用</div></div>
<div class="cell" style="left:1666px;top:525px;width:206px;height:74px"><div class="lnk"><svg class="ic" width="12" height="12" viewBox="0 0 48 48" fill="none" stroke="currentColor" stroke-width="4" ><path d="m30.48 19.038 5.733-5.734a1 1 0 0 0 0-1.414l-5.586-5.586a1 1 0 0 0-1.414 0l-5.734 5.734m7 7L15.763 33.754a1 1 0 0 1-.59.286l-6.048.708a1 1 0 0 1-1.113-1.069l.477-6.31a1 1 0 0 1 .29-.631l14.7-14.7m7 7-7-7M6 42h36"/></svg>修改</div><div style="width:24px"></div><div class="lnk"><svg class="ic" width="12" height="12" viewBox="0 0 48 48" fill="none" stroke="currentColor" stroke-width="4" ><path d="M5 11h5.5m0 0v29a1 1 0 0 0 1 1h25a1 1 0 0 0 1-1V11m-27 0H16m21.5 0H43m-5.5 0H32m-16 0V7h16v4m-16 0h16M20 18v15m8-15v15"/></svg>删除</div></div>
<div class="rowb" style="top:599px"></div>
<div class="cell" style="left:256px;top:600px;width:40px;height:74px"><div class="cb"></div></div>
<div class="cell" style="left:296px;top:600px;width:60px;height:74px">638</div>
<div class="cell" style="left:356px;top:600px;width:120px;height:74px">4288604860</div>
<div class="cell" style="left:476px;top:600px;width:100px;height:74px"><svg width="61" height="61" viewBox="0 0 122 122" style="transform:translate(0.5px,0.5px)"><defs><clipPath id="ac3"><circle cx="61" cy="61" r="60.8"/></clipPath></defs><circle cx="61" cy="61" r="60.6" fill="#fff" stroke="#d9d9d9" stroke-width="1"/><g clip-path="url(#ac3)"><path d="M20 126 L25 110 Q38 95 52 88 L58 85 Q66 90 74 85 L86 87 Q96 92 110 92 L124 98 L124 130 Z" fill="#63a1f2"/><path d="M54 87 Q64 96 78 87 L82 90 Q64 103 48 91 Z" fill="#4a7fd6"/><path d="M58 84.5 Q64 89 71 84.5" fill="#b9cdf0" stroke="none"/><path d="M25 110 Q38 95 54 87.5" fill="none" stroke="#000" stroke-width="3"/><path d="M41.5 94 L40.5 112 M87 90 L86 108 M40 119 L40 126 M89 114 L93 121" fill="none" stroke="#111" stroke-width="2.6"/></g><ellipse cx="64.1" cy="50.9" rx="35.3" ry="31.8" fill="#fff" stroke="#000" stroke-width="3.2"/><circle cx="55.5" cy="48.7" r="1.6" fill="#000"/><path d="M69.4 47.3 L74.8 45.6" stroke="#000" stroke-width="2.2" stroke-linecap="round"/><path d="M54.7 57.5 Q64 56 74.3 54.5 Q75.5 66.5 64.5 68.1 Q55 68.5 54.7 57.5Z" fill="#fff" stroke="#000" stroke-width="2.6"/><g transform="translate(3 1)"><path d="M91 94 Q85 88 90 82 Q89 70 92 65 Q96 60 99 66 L100 74 Q103 64 107 63 Q111 63 110 68 L106 80 Q113 86 108 93 Q100 99 91 94Z" fill="#fff" stroke="#000" stroke-width="2.6"/><path d="M92 86 Q97 84 100 87 M100 80 Q106 82 104 90" fill="none" stroke="#000" stroke-width="2"/></g><path d="M110.5 33 Q112 43 116.8 45.5 Q112 48 110.5 58 Q109 48 104.2 45.5 Q109 43 110.5 33Z" fill="#f7d77a" stroke="#ecbd58" stroke-width="1"/></svg></div>
<div class="cell" style="left:576px;top:600px;width:130px;height:74px">小蓝薯7nxvGQ</div>
<div class="cell" style="left:706px;top:600px;width:100px;height:74px"><div class="tag tb">男</div></div>
<div class="cell" style="left:806px;top:600px;width:120px;height:74px">1875478452<br>1</div>
<div class="cell" style="left:926px;top:600px;width:110px;height:74px"><div class="tag tg">app端</div></div>
<div class="cell" style="left:1036px;top:600px;width:120px;height:74px"><span class="num">0</span></div>
<div class="cell" style="left:1156px;top:600px;width:120px;height:74px"><span class="num">0</span></div>
<div class="cell" style="left:1276px;top:600px;width:130px;height:74px">180.213.163.11<br>1</div>
<div class="cell" style="left:1406px;top:600px;width:140px;height:74px"><div class="tag to">天津市 天津市</div></div>
<div class="cell" style="left:1546px;top:600px;width:119px;height:74px"><div class="sw">启用</div></div>
<div class="cell" style="left:1666px;top:600px;width:206px;height:74px"><div class="lnk"><svg class="ic" width="12" height="12" viewBox="0 0 48 48" fill="none" stroke="currentColor" stroke-width="4" ><path d="m30.48 19.038 5.733-5.734a1 1 0 0 0 0-1.414l-5.586-5.586a1 1 0 0 0-1.414 0l-5.734 5.734m7 7L15.763 33.754a1 1 0 0 1-.59.286l-6.048.708a1 1 0 0 1-1.113-1.069l.477-6.31a1 1 0 0 1 .29-.631l14.7-14.7m7 7-7-7M6 42h36"/></svg>修改</div><div style="width:24px"></div><div class="lnk"><svg class="ic" width="12" height="12" viewBox="0 0 48 48" fill="none" stroke="currentColor" stroke-width="4" ><path d="M5 11h5.5m0 0v29a1 1 0 0 0 1 1h25a1 1 0 0 0 1-1V11m-27 0H16m21.5 0H43m-5.5 0H32m-16 0V7h16v4m-16 0h16M20 18v15m8-15v15"/></svg>删除</div></div>
<div class="rowb" style="top:674px"></div>
<div class="cell" style="left:256px;top:675px;width:40px;height:74px"><div class="cb"></div></div>
<div class="cell" style="left:296px;top:675px;width:60px;height:74px">637</div>
<div class="cell" style="left:356px;top:675px;width:120px;height:74px">5137184373</div>
<div class="cell" style="left:476px;top:675px;width:100px;height:74px"><svg width="61" height="61" viewBox="0 0 122 122" style="transform:translate(0.5px,0.5px)"><defs><clipPath id="ac4"><circle cx="61" cy="61" r="60.8"/></clipPath></defs><circle cx="61" cy="61" r="60.6" fill="#fff" stroke="#d9d9d9" stroke-width="1"/><g clip-path="url(#ac4)"><path d="M20 126 L25 110 Q38 95 52 88 L58 85 Q66 90 74 85 L86 87 Q96 92 110 92 L124 98 L124 130 Z" fill="#63a1f2"/><path d="M54 87 Q64 96 78 87 L82 90 Q64 103 48 91 Z" fill="#4a7fd6"/><path d="M58 84.5 Q64 89 71 84.5" fill="#b9cdf0" stroke="none"/><path d="M25 110 Q38 95 54 87.5" fill="none" stroke="#000" stroke-width="3"/><path d="M41.5 94 L40.5 112 M87 90 L86 108 M40 119 L40 126 M89 114 L93 121" fill="none" stroke="#111" stroke-width="2.6"/></g><ellipse cx="64.1" cy="50.9" rx="35.3" ry="31.8" fill="#fff" stroke="#000" stroke-width="3.2"/><circle cx="55.5" cy="48.7" r="1.6" fill="#000"/><path d="M69.4 47.3 L74.8 45.6" stroke="#000" stroke-width="2.2" stroke-linecap="round"/><path d="M54.7 57.5 Q64 56 74.3 54.5 Q75.5 66.5 64.5 68.1 Q55 68.5 54.7 57.5Z" fill="#fff" stroke="#000" stroke-width="2.6"/><g transform="translate(3 1)"><path d="M91 94 Q85 88 90 82 Q89 70 92 65 Q96 60 99 66 L100 74 Q103 64 107 63 Q111 63 110 68 L106 80 Q113 86 108 93 Q100 99 91 94Z" fill="#fff" stroke="#000" stroke-width="2.6"/><path d="M92 86 Q97 84 100 87 M100 80 Q106 82 104 90" fill="none" stroke="#000" stroke-width="2"/></g><path d="M110.5 33 Q112 43 116.8 45.5 Q112 48 110.5 58 Q109 48 104.2 45.5 Q109 43 110.5 33Z" fill="#f7d77a" stroke="#ecbd58" stroke-width="1"/></svg></div>
<div class="cell" style="left:576px;top:675px;width:130px;height:74px">小蓝薯MMdlOo</div>
<div class="cell" style="left:706px;top:675px;width:100px;height:74px"><div class="tag tb">男</div></div>
<div class="cell" style="left:806px;top:675px;width:120px;height:74px">18131076253</div>
<div class="cell" style="left:926px;top:675px;width:110px;height:74px"><div class="tag tg">app端</div></div>
<div class="cell" style="left:1036px;top:675px;width:120px;height:74px"><span class="num">0</span></div>
<div class="cell" style="left:1156px;top:675px;width:120px;height:74px"><span class="num">0</span></div>
<div class="cell" style="left:1276px;top:675px;width:130px;height:74px">223.160.134.13<br>3</div>
<div class="cell" style="left:1406px;top:675px;width:140px;height:74px"><div class="tag to">北京市 北京市</div></div>
<div class="cell" style="left:1546px;top:675px;width:119px;height:74px"><div class="sw">启用</div></div>
<div class="cell" style="left:1666px;top:675px;width:206px;height:74px"><div class="lnk"><svg class="ic" width="12" height="12" viewBox="0 0 48 48" fill="none" stroke="currentColor" stroke-width="4" ><path d="m30.48 19.038 5.733-5.734a1 1 0 0 0 0-1.414l-5.586-5.586a1 1 0 0 0-1.414 0l-5.734 5.734m7 7L15.763 33.754a1 1 0 0 1-.59.286l-6.048.708a1 1 0 0 1-1.113-1.069l.477-6.31a1 1 0 0 1 .29-.631l14.7-14.7m7 7-7-7M6 42h36"/></svg>修改</div><div style="width:24px"></div><div class="lnk"><svg class="ic" width="12" height="12" viewBox="0 0 48 48" fill="none" stroke="currentColor" stroke-width="4" ><path d="M5 11h5.5m0 0v29a1 1 0 0 0 1 1h25a1 1 0 0 0 1-1V11m-27 0H16m21.5 0H43m-5.5 0H32m-16 0V7h16v4m-16 0h16M20 18v15m8-15v15"/></svg>删除</div></div>
<div class="rowb" style="top:749px"></div>
<div class="cell" style="left:256px;top:750px;width:40px;height:74px"><div class="cb"></div></div>
<div class="cell" style="left:296px;top:750px;width:60px;height:74px">636</div>
<div class="cell" style="left:356px;top:750px;width:120px;height:74px">5283255327</div>
<div class="cell" style="left:476px;top:750px;width:100px;height:74px"><svg width="61" height="61" viewBox="0 0 122 122" style="transform:translate(0.5px,0.5px)"><defs><clipPath id="ac5"><circle cx="61" cy="61" r="60.8"/></clipPath></defs><circle cx="61" cy="61" r="60.6" fill="#fff" stroke="#d9d9d9" stroke-width="1"/><g clip-path="url(#ac5)"><path d="M20 126 L25 110 Q38 95 52 88 L58 85 Q66 90 74 85 L86 87 Q96 92 110 92 L124 98 L124 130 Z" fill="#63a1f2"/><path d="M54 87 Q64 96 78 87 L82 90 Q64 103 48 91 Z" fill="#4a7fd6"/><path d="M58 84.5 Q64 89 71 84.5" fill="#b9cdf0" stroke="none"/><path d="M25 110 Q38 95 54 87.5" fill="none" stroke="#000" stroke-width="3"/><path d="M41.5 94 L40.5 112 M87 90 L86 108 M40 119 L40 126 M89 114 L93 121" fill="none" stroke="#111" stroke-width="2.6"/></g><ellipse cx="64.1" cy="50.9" rx="35.3" ry="31.8" fill="#fff" stroke="#000" stroke-width="3.2"/><circle cx="55.5" cy="48.7" r="1.6" fill="#000"/><path d="M69.4 47.3 L74.8 45.6" stroke="#000" stroke-width="2.2" stroke-linecap="round"/><path d="M54.7 57.5 Q64 56 74.3 54.5 Q75.5 66.5 64.5 68.1 Q55 68.5 54.7 57.5Z" fill="#fff" stroke="#000" stroke-width="2.6"/><g transform="translate(3 1)"><path d="M91 94 Q85 88 90 82 Q89 70 92 65 Q96 60 99 66 L100 74 Q103 64 107 63 Q111 63 110 68 L106 80 Q113 86 108 93 Q100 99 91 94Z" fill="#fff" stroke="#000" stroke-width="2.6"/><path d="M92 86 Q97 84 100 87 M100 80 Q106 82 104 90" fill="none" stroke="#000" stroke-width="2"/></g><path d="M110.5 33 Q112 43 116.8 45.5 Q112 48 110.5 58 Q109 48 104.2 45.5 Q109 43 110.5 33Z" fill="#f7d77a" stroke="#ecbd58" stroke-width="1"/></svg></div>
<div class="cell" style="left:576px;top:750px;width:130px;height:74px">小蓝薯QByGq2</div>
<div class="cell" style="left:706px;top:750px;width:100px;height:74px"><div class="tag tb">男</div></div>
<div class="cell" style="left:806px;top:750px;width:120px;height:74px">1873028382<br>8</div>
<div class="cell" style="left:926px;top:750px;width:110px;height:74px"><div class="tag tg">app端</div></div>
<div class="cell" style="left:1036px;top:750px;width:120px;height:74px"><span class="num">0</span></div>
<div class="cell" style="left:1156px;top:750px;width:120px;height:74px"><span class="num">0</span></div>
<div class="cell" style="left:1276px;top:750px;width:130px;height:74px">65.75.223.54</div>
<div class="cell" style="left:1406px;top:750px;width:140px;height:74px"><div class="tag to">美国</div></div>
<div class="cell" style="left:1546px;top:750px;width:119px;height:74px"><div class="sw">启用</div></div>
<div class="cell" style="left:1666px;top:750px;width:206px;height:74px"><div class="lnk"><svg class="ic" width="12" height="12" viewBox="0 0 48 48" fill="none" stroke="currentColor" stroke-width="4" ><path d="m30.48 19.038 5.733-5.734a1 1 0 0 0 0-1.414l-5.586-5.586a1 1 0 0 0-1.414 0l-5.734 5.734m7 7L15.763 33.754a1 1 0 0 1-.59.286l-6.048.708a1 1 0 0 1-1.113-1.069l.477-6.31a1 1 0 0 1 .29-.631l14.7-14.7m7 7-7-7M6 42h36"/></svg>修改</div><div style="width:24px"></div><div class="lnk"><svg class="ic" width="12" height="12" viewBox="0 0 48 48" fill="none" stroke="currentColor" stroke-width="4" ><path d="M5 11h5.5m0 0v29a1 1 0 0 0 1 1h25a1 1 0 0 0 1-1V11m-27 0H16m21.5 0H43m-5.5 0H32m-16 0V7h16v4m-16 0h16M20 18v15m8-15v15"/></svg>删除</div></div>
<div class="rowb" style="top:824px"></div>
<div class="cell" style="left:256px;top:825px;width:40px;height:74px"><div class="cb"></div></div>
<div class="cell" style="left:296px;top:825px;width:60px;height:74px">635</div>
<div class="cell" style="left:356px;top:825px;width:120px;height:74px">6239108261</div>
<div class="cell" style="left:476px;top:825px;width:100px;height:74px"><svg width="61" height="61" viewBox="0 0 122 122" style="transform:translate(0.5px,0.5px)"><defs><clipPath id="ac6"><circle cx="61" cy="61" r="60.8"/></clipPath></defs><circle cx="61" cy="61" r="60.6" fill="#fff" stroke="#d9d9d9" stroke-width="1"/><g clip-path="url(#ac6)"><path d="M20 126 L25 110 Q38 95 52 88 L58 85 Q66 90 74 85 L86 87 Q96 92 110 92 L124 98 L124 130 Z" fill="#63a1f2"/><path d="M54 87 Q64 96 78 87 L82 90 Q64 103 48 91 Z" fill="#4a7fd6"/><path d="M58 84.5 Q64 89 71 84.5" fill="#b9cdf0" stroke="none"/><path d="M25 110 Q38 95 54 87.5" fill="none" stroke="#000" stroke-width="3"/><path d="M41.5 94 L40.5 112 M87 90 L86 108 M40 119 L40 126 M89 114 L93 121" fill="none" stroke="#111" stroke-width="2.6"/></g><ellipse cx="64.1" cy="50.9" rx="35.3" ry="31.8" fill="#fff" stroke="#000" stroke-width="3.2"/><circle cx="55.5" cy="48.7" r="1.6" fill="#000"/><path d="M69.4 47.3 L74.8 45.6" stroke="#000" stroke-width="2.2" stroke-linecap="round"/><path d="M54.7 57.5 Q64 56 74.3 54.5 Q75.5 66.5 64.5 68.1 Q55 68.5 54.7 57.5Z" fill="#fff" stroke="#000" stroke-width="2.6"/><g transform="translate(3 1)"><path d="M91 94 Q85 88 90 82 Q89 70 92 65 Q96 60 99 66 L100 74 Q103 64 107 63 Q111 63 110 68 L106 80 Q113 86 108 93 Q100 99 91 94Z" fill="#fff" stroke="#000" stroke-width="2.6"/><path d="M92 86 Q97 84 100 87 M100 80 Q106 82 104 90" fill="none" stroke="#000" stroke-width="2"/></g><path d="M110.5 33 Q112 43 116.8 45.5 Q112 48 110.5 58 Q109 48 104.2 45.5 Q109 43 110.5 33Z" fill="#f7d77a" stroke="#ecbd58" stroke-width="1"/></svg></div>
<div class="cell" style="left:576px;top:825px;width:130px;height:74px">小蓝薯UFAhf3</div>
<div class="cell" style="left:706px;top:825px;width:100px;height:74px"><div class="tag tb">男</div></div>
<div class="cell" style="left:806px;top:825px;width:120px;height:74px">1875554784<br>1</div>
<div class="cell" style="left:926px;top:825px;width:110px;height:74px"><div class="tag tb">web端</div></div>
<div class="cell" style="left:1036px;top:825px;width:120px;height:74px"><span class="num">0</span></div>
<div class="cell" style="left:1156px;top:825px;width:120px;height:74px"><span class="num">0</span></div>
<div class="cell" style="left:1276px;top:825px;width:130px;height:74px">180.213.163.11<br>1</div>
<div class="cell" style="left:1406px;top:825px;width:140px;height:74px"><div class="tag to">天津市 天津市</div></div>
<div class="cell" style="left:1546px;top:825px;width:119px;height:74px"><div class="sw">启用</div></div>
<div class="cell" style="left:1666px;top:825px;width:206px;height:74px"><div class="lnk"><svg class="ic" width="12" height="12" viewBox="0 0 48 48" fill="none" stroke="currentColor" stroke-width="4" ><path d="m30.48 19.038 5.733-5.734a1 1 0 0 0 0-1.414l-5.586-5.586a1 1 0 0 0-1.414 0l-5.734 5.734m7 7L15.763 33.754a1 1 0 0 1-.59.286l-6.048.708a1 1 0 0 1-1.113-1.069l.477-6.31a1 1 0 0 1 .29-.631l14.7-14.7m7 7-7-7M6 42h36"/></svg>修改</div><div style="width:24px"></div><div class="lnk"><svg class="ic" width="12" height="12" viewBox="0 0 48 48" fill="none" stroke="currentColor" stroke-width="4" ><path d="M5 11h5.5m0 0v29a1 1 0 0 0 1 1h25a1 1 0 0 0 1-1V11m-27 0H16m21.5 0H43m-5.5 0H32m-16 0V7h16v4m-16 0h16M20 18v15m8-15v15"/></svg>删除</div></div>
<div class="rowb" style="top:899px"></div>
<div class="cell" style="left:256px;top:900px;width:40px;height:74px"><div class="cb"></div></div>
<div class="cell" style="left:296px;top:900px;width:60px;height:74px">634</div>
<div class="cell" style="left:356px;top:900px;width:120px;height:74px">3204611530</div>
<div class="cell" style="left:476px;top:900px;width:100px;height:74px"><svg width="61" height="61" viewBox="0 0 122 122" style="transform:translate(0.5px,0.5px)"><defs><clipPath id="ac7"><circle cx="61" cy="61" r="60.8"/></clipPath></defs><circle cx="61" cy="61" r="60.6" fill="#fff" stroke="#d9d9d9" stroke-width="1"/><g clip-path="url(#ac7)"><path d="M20 126 L25 110 Q38 95 52 88 L58 85 Q66 90 74 85 L86 87 Q96 92 110 92 L124 98 L124 130 Z" fill="#63a1f2"/><path d="M54 87 Q64 96 78 87 L82 90 Q64 103 48 91 Z" fill="#4a7fd6"/><path d="M58 84.5 Q64 89 71 84.5" fill="#b9cdf0" stroke="none"/><path d="M25 110 Q38 95 54 87.5" fill="none" stroke="#000" stroke-width="3"/><path d="M41.5 94 L40.5 112 M87 90 L86 108 M40 119 L40 126 M89 114 L93 121" fill="none" stroke="#111" stroke-width="2.6"/></g><ellipse cx="64.1" cy="50.9" rx="35.3" ry="31.8" fill="#fff" stroke="#000" stroke-width="3.2"/><circle cx="55.5" cy="48.7" r="1.6" fill="#000"/><path d="M69.4 47.3 L74.8 45.6" stroke="#000" stroke-width="2.2" stroke-linecap="round"/><path d="M54.7 57.5 Q64 56 74.3 54.5 Q75.5 66.5 64.5 68.1 Q55 68.5 54.7 57.5Z" fill="#fff" stroke="#000" stroke-width="2.6"/><g transform="translate(3 1)"><path d="M91 94 Q85 88 90 82 Q89 70 92 65 Q96 60 99 66 L100 74 Q103 64 107 63 Q111 63 110 68 L106 80 Q113 86 108 93 Q100 99 91 94Z" fill="#fff" stroke="#000" stroke-width="2.6"/><path d="M92 86 Q97 84 100 87 M100 80 Q106 82 104 90" fill="none" stroke="#000" stroke-width="2"/></g><path d="M110.5 33 Q112 43 116.8 45.5 Q112 48 110.5 58 Q109 48 104.2 45.5 Q109 43 110.5 33Z" fill="#f7d77a" stroke="#ecbd58" stroke-width="1"/></svg></div>
<div class="cell" style="left:576px;top:900px;width:130px;height:74px">小蓝薯PtfVh5</div>
<div class="cell" style="left:706px;top:900px;width:100px;height:74px"><div class="tag tb">男</div></div>
<div class="cell" style="left:806px;top:900px;width:120px;height:74px">18611326726</div>
<div class="cell" style="left:926px;top:900px;width:110px;height:74px"><div class="tag tg">app端</div></div>
<div class="cell" style="left:1036px;top:900px;width:120px;height:74px"><span class="num">0</span></div>
<div class="cell" style="left:1156px;top:900px;width:120px;height:74px"><span class="num">0</span></div>
<div class="cell" style="left:1276px;top:900px;width:130px;height:74px">14.24.129.72</div>
<div class="cell" style="left:1406px;top:900px;width:140px;height:74px"><div class="tag to">广东省 广州市</div></div>
<div class="cell" style="left:1546px;top:900px;width:119px;height:74px"><div class="sw">启用</div></div>
<div class="cell" style="left:1666px;top:900px;width:206px;height:74px"><div class="lnk"><svg class="ic" width="12" height="12" viewBox="0 0 48 48" fill="none" stroke="currentColor" stroke-width="4" ><path d="m30.48 19.038 5.733-5.734a1 1 0 0 0 0-1.414l-5.586-5.586a1 1 0 0 0-1.414 0l-5.734 5.734m7 7L15.763 33.754a1 1 0 0 1-.59.286l-6.048.708a1 1 0 0 1-1.113-1.069l.477-6.31a1 1 0 0 1 .29-.631l14.7-14.7m7 7-7-7M6 42h36"/></svg>修改</div><div style="width:24px"></div><div class="lnk"><svg class="ic" width="12" height="12" viewBox="0 0 48 48" fill="none" stroke="currentColor" stroke-width="4" ><path d="M5 11h5.5m0 0v29a1 1 0 0 0 1 1h25a1 1 0 0 0 1-1V11m-27 0H16m21.5 0H43m-5.5 0H32m-16 0V7h16v4m-16 0h16M20 18v15m8-15v15"/></svg>删除</div></div>
<div class="rowb" style="top:974px"></div>
<div class="sb"><div class="thumb"></div></div>
<div class="topline"></div>
</div></body></html>
